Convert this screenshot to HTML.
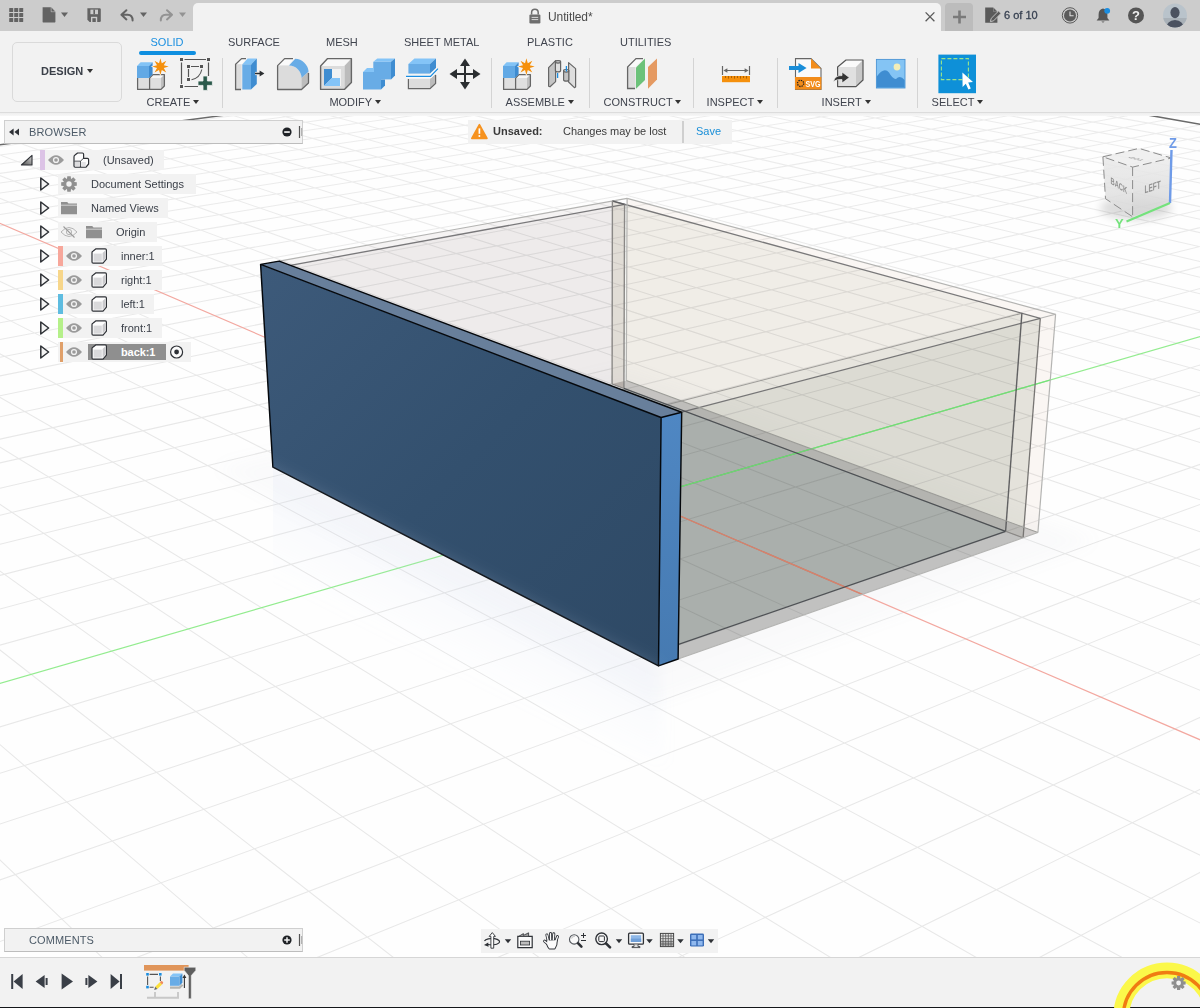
<!DOCTYPE html><html lang="en"><head><meta charset="utf-8"><title>Autodesk Fusion 360</title><style>
*{box-sizing:border-box;margin:0;padding:0}
html,body{width:1200px;height:1008px;overflow:hidden;background:#fefefe}
body{position:relative;font-family:"Liberation Sans",Arial,sans-serif;font-size:11px;color:#3c4350}
#vp{position:absolute;left:0;top:0}
.abs{position:absolute}
#topbar{position:absolute;left:0;top:0;width:1200px;height:31px;background:#cccccc}
#topstrip{display:none}
#tab{position:absolute;left:193px;top:3px;width:748px;height:29px;background:#f2f2f2;border-radius:5px 5px 0 0}
#tabtitle{position:absolute;left:548px;top:10px;font-size:12px;color:#4b4b4b;letter-spacing:-0.1px}
#plusbox{position:absolute;left:945px;top:3px;width:28px;height:28px;background:#bcbcbc;border-radius:4px 4px 0 0}
#jobs{position:absolute;left:1004px;top:9px;font-size:11px;color:#384252;-webkit-text-stroke:0.3px #384252}
#toolbar{position:absolute;left:0;top:31px;width:1200px;height:82px;background:#f2f2f2;border-bottom:1px solid #dcdcdc}
#tbshadow{position:absolute;left:0;top:113px;width:1200px;height:3px;background:linear-gradient(#eeeeee,#f7f7f7)}
#design{position:absolute;left:11.6px;top:41.6px;width:110px;height:60.6px;border:1.4px solid #dadada;border-radius:5px;background:#f2f2f2}
#design span{position:absolute;left:28.5px;top:22px;font-weight:bold;font-size:11px;color:#3a3f48}
.rtab{position:absolute;top:36px;font-size:11px;color:#40444e;white-space:nowrap}
.rtab.on{color:#1a8fe0}
#underline{position:absolute;left:139px;top:51px;width:57px;height:4px;border-radius:2px;background:#0f8fe0}
.glab{position:absolute;top:96px;font-size:11px;color:#40444e;white-space:nowrap}
.glab i{display:inline-block;width:0;height:0;border-left:3px solid transparent;border-right:3px solid transparent;border-top:4px solid #333;margin-left:2.8px;vertical-align:2px}
.sep{position:absolute;top:58px;width:1.5px;height:50px;background:#d4d4d4}
.ico{position:absolute;overflow:visible}
.panel{position:absolute;left:4px;width:299px;height:24px;background:#f2f2f2;border:1px solid #cfcfcf;border-bottom-color:#bdbdbd}
.panel span{position:absolute;left:24px;top:5px;font-size:11px;color:#4d5b68;letter-spacing:0.1px}
.row{position:absolute;height:20px;background:#f2f2f2}
.row .t{position:absolute;top:4px;font-size:11px;color:#3b4049;white-space:nowrap}
.stripe{position:absolute;top:0;height:20px}
#notif{position:absolute;left:468px;top:120px;width:264px;height:24px;background:#f2f2f2}
#notif b{position:absolute;left:25px;top:5px;font-size:11px;color:#3a3a3a}
#notif span{position:absolute;left:95px;top:5px;font-size:11px;color:#3a3a3a}
#notif a{position:absolute;left:228px;top:5px;font-size:11px;color:#1a8fd8}
#notif i{position:absolute;left:214px;top:1px;width:1.5px;height:22px;background:#cfcfcf}
#navbar{position:absolute;left:481px;top:929px;width:237px;height:24px;background:#f2f2f2}
#bottombar{position:absolute;left:0;top:957px;width:1200px;height:50px;background:#f2f2f2;border-top:1px solid #d6d6d6}
#blackstrip{position:absolute;left:0;top:1006.6px;width:1200px;height:2px;background:#14171a}
</style></head><body>
<svg id="vp" width="1200" height="1008" viewBox="0 0 1200 1008">
<defs><filter id="bl" x="-20%" y="-20%" width="140%" height="140%"><feGaussianBlur stdDeviation="9"/></filter><filter id="bl2" x="-50%" y="-50%" width="200%" height="200%"><feGaussianBlur stdDeviation="4"/></filter><linearGradient id="bf" x1="0" y1="0" x2="1" y2="1"><stop offset="0" stop-color="#3d5a7a"/><stop offset="0.5" stop-color="#33506e"/><stop offset="1" stop-color="#2e4965"/></linearGradient><linearGradient id="fade" x1="0" y1="0" x2="0" y2="1"><stop offset="0" stop-color="#fefefe" stop-opacity="0.2"/><stop offset="1" stop-color="#fefefe" stop-opacity="0"/></linearGradient><linearGradient id="cfl" x1="0" y1="0" x2="0" y2="1"><stop offset="0" stop-color="#e9e9e9"/><stop offset="1" stop-color="#dcdcdc"/></linearGradient><linearGradient id="cfr" x1="0" y1="0" x2="0" y2="1"><stop offset="0" stop-color="#ececec"/><stop offset="1" stop-color="#d4d4d4"/></linearGradient><linearGradient id="sf" x1="0" y1="0" x2="0" y2="1"><stop offset="0" stop-color="#4f87c3"/><stop offset="1" stop-color="#467ab1"/></linearGradient><linearGradient id="gsh" gradientUnits="userSpaceOnUse" x1="465" y1="566" x2="420" y2="654"><stop offset="0" stop-color="#cfd9f0" stop-opacity="0.17"/><stop offset="1" stop-color="#cfd9f0" stop-opacity="0"/></linearGradient><filter id="bl3" x="-10%" y="-10%" width="120%" height="120%"><feGaussianBlur stdDeviation="7"/></filter></defs>
<rect x="0" y="0" width="1200" height="1008" fill="#fefefe"/>
<path d="M-779.9 249.5L757.5 46.5M-772.4 259.0L779.0 50.3M-764.6 268.9L801.1 54.2M-756.4 279.1L823.6 58.2M-748.0 289.7L846.6 62.2M-739.3 300.7L870.2 66.3M-730.3 312.1L894.3 70.6M-720.9 324.0L919.0 74.9M-711.1 336.3L944.3 79.3M-700.9 349.1L970.1 83.9M-690.3 362.4L996.6 88.5M-679.3 376.3L1023.8 93.3M-667.8 390.8L1051.6 98.2M-655.8 405.9L1080.1 103.2M-643.3 421.7L1109.3 108.3M-630.2 438.3L1139.3 113.6M-616.4 455.6L1170.1 119.0M-602.1 473.7L1201.7 124.6M-587.0 492.7L1234.1 130.3M-571.1 512.7L1267.5 136.1M-554.4 533.7L1301.7 142.1M-536.9 555.9L1336.9 148.3M-518.4 579.2L1373.1 154.7M-498.8 603.8L1410.4 161.2M-478.1 629.9L1448.7 168.0M-456.2 657.5L1488.2 174.9M-433.0 686.8L1528.8 182.0M-408.2 718.0L1570.7 189.4M-381.9 751.2L1613.9 197.0M-323.7 824.5L1704.4 212.9M-291.5 865.1L1751.9 221.2M-256.8 908.8L1800.9 229.8M-219.5 955.9L1851.6 238.7M-179.1 1006.8L1904.1 248.0M-135.3 1062.0L1958.3 257.5M-87.7 1122.0L2014.5 267.3M-35.6 1187.6L2072.7 277.6M21.5 1259.6L2133.0 288.2M84.4 1338.8L2195.5 299.2M154.0 1426.6L2260.5 310.6M231.5 1524.3L2328.0 322.4M318.3 1633.6L2398.1 334.7M-770.0 246.0L425.2 1709.4M-713.7 238.6L568.1 1613.3M-658.9 231.4L698.1 1526.0M-605.5 224.4L816.7 1446.3M-553.5 217.5L925.4 1373.2M-502.9 210.9L1025.5 1306.0M-453.5 204.4L1117.8 1243.9M-405.3 198.0L1203.3 1186.5M-358.3 191.9L1282.6 1133.2M-312.5 185.8L1356.5 1083.5M-267.8 179.9L1425.5 1037.2M-224.1 174.2L1490.0 993.8M-181.4 168.6L1550.4 953.2M-99.0 157.8L1660.7 879.1M-59.2 152.5L1711.1 845.2M-20.3 147.4L1758.7 813.2M17.8 142.4L1803.7 783.0M55.0 137.5L1846.3 754.3M91.4 132.7L1886.8 727.1M127.1 128.0L1925.2 701.3M161.9 123.4L1961.8 676.7M196.1 119.0L1996.6 653.3M229.5 114.6L2029.8 631.0M262.3 110.2L2061.5 609.7M294.4 106.0L2091.8 589.4M325.8 101.9L2120.7 569.9M356.7 97.8L2148.5 551.3M386.9 93.9L2175.0 533.4M416.5 90.0L2200.5 516.3M445.6 86.1L2225.0 499.8M474.1 82.4L2248.5 484.0M502.0 78.7L2271.1 468.9M529.4 75.1L2292.9 454.2M556.4 71.6L2313.8 440.2M582.8 68.1L2334.0 426.6M608.7 64.7L2353.4 413.5M634.2 61.3L2372.2 400.9M659.2 58.0L2390.3 388.7M683.8 54.8L2407.9 376.9M707.9 51.6L2424.8 365.6M731.7 48.5L2441.2 354.6" stroke="#e8e8e8" stroke-width="1.05" fill="none"/>
<rect x="0" y="112" width="1200" height="260" fill="url(#fade)"/>
<line x1="-781.5" y1="247.5" x2="752.9" y2="45.7" stroke="#6a6a6a" stroke-width="1.6" />
<line x1="752.9" y1="45.7" x2="2455.6" y2="344.8" stroke="#6a6a6a" stroke-width="1.6" />
<polygon points="214.6,467.5 653.1,702.7 1098.4,540.7 624.9,368.6" fill="#8a93a8" opacity="0.035" filter="url(#bl)"/>
<line x1="-40.4" y1="205.9" x2="1355.8" y2="806.8" stroke="#f3a8a0" stroke-width="1.2" />
<line x1="-162.5" y1="730.2" x2="1242.2" y2="324.5" stroke="#93ec8f" stroke-width="1.2" />
<g id="box">
<polygon points="279.2,261.1 612.4,201.0 612.1,384.0 290.7,462.8" fill="#f6f4f4" style="mix-blend-mode:multiply"/>
<polygon points="290.4,265.3 624.6,204.4 623.9,388.4 301.5,468.3" fill="#f8f7f7" style="mix-blend-mode:multiply"/>
<polygon points="612.4,201.0 624.6,204.4 623.9,388.4 612.1,384.0" fill="#f3eeea" style="mix-blend-mode:multiply"/>
<polygon points="627.1,198.4 1055.6,314.3 1037.9,532.6 626.3,380.5" fill="#fbf7f4" style="mix-blend-mode:multiply"/>
<polygon points="612.4,201.0 1040.3,318.3 1023.1,537.8 612.1,384.0" fill="#f5f6f3" style="mix-blend-mode:multiply"/>
<polygon points="626.3,380.5 1037.9,532.6 1023.1,537.8 612.1,384.0" fill="#d2cfce" style="mix-blend-mode:multiply"/>
<polygon points="301.5,468.3 623.9,388.4 1005.6,531.3 661.2,650.4" fill="#bec2c0" style="mix-blend-mode:multiply"/>
<polygon points="681.7,412.2 1040.3,318.3 1023.1,537.8 678.1,659.0" fill="#f3f4f2" style="mix-blend-mode:multiply"/>
<polygon points="664.0,405.5 1021.9,313.3 1005.6,531.3 661.2,650.4" fill="#f6f7f6" style="mix-blend-mode:multiply"/>
<polygon points="661.2,650.4 1005.6,531.3 1023.1,537.8 678.1,659.0" fill="#d0cfcf" style="mix-blend-mode:multiply"/>
<clipPath id="boxclip"><polygon points="260.6,264.4 279.2,261.1 627.1,198.4 1055.6,314.3 1037.9,532.6 1023.1,537.8 678.1,659.0 658.5,665.9 272.9,467.2"/></clipPath>
<g clip-path="url(#boxclip)"><line x1="-40.4" y1="205.9" x2="1355.8" y2="806.8" stroke="#e6856a" stroke-width="1.2" opacity="0.8"/><line x1="-162.5" y1="730.2" x2="1242.2" y2="324.5" stroke="#6fe276" stroke-width="1.2" opacity="0.85"/></g>
<line x1="279.2" y1="261.1" x2="627.1" y2="198.4" stroke="#b4b4b2" stroke-width="1.2" stroke-opacity="1"/>
<line x1="627.1" y1="198.4" x2="1055.6" y2="314.3" stroke="#b4b4b2" stroke-width="1.2" stroke-opacity="1"/>
<line x1="290.4" y1="265.3" x2="624.6" y2="204.4" stroke="#5a5a5c" stroke-width="1.3" stroke-opacity="0.8"/>
<line x1="612.4" y1="201.0" x2="1040.3" y2="318.3" stroke="#5a5a5c" stroke-width="1.3" stroke-opacity="0.8"/>
<line x1="681.7" y1="412.2" x2="1040.3" y2="318.3" stroke="#5a5a5c" stroke-width="1.3" stroke-opacity="0.8"/>
<line x1="664.0" y1="405.5" x2="1021.9" y2="313.3" stroke="#8a8886" stroke-width="1.1" stroke-opacity="0.8"/>
<line x1="1055.6" y1="314.3" x2="1040.3" y2="318.3" stroke="#b4b4b2" stroke-width="1.1" stroke-opacity="1"/>
<line x1="612.4" y1="201.0" x2="624.6" y2="204.4" stroke="#5a5a5c" stroke-width="1.2" stroke-opacity="0.8"/>
<line x1="627.1" y1="198.4" x2="626.3" y2="380.5" stroke="#b4b4b2" stroke-width="1.2" stroke-opacity="1"/>
<line x1="612.4" y1="201.0" x2="612.1" y2="384.0" stroke="#8a8886" stroke-width="1.4" stroke-opacity="1"/>
<line x1="624.6" y1="204.4" x2="623.9" y2="388.4" stroke="#8a8886" stroke-width="1.4" stroke-opacity="1"/>
<line x1="1055.6" y1="314.3" x2="1037.9" y2="532.6" stroke="#b4b4b2" stroke-width="1.2" stroke-opacity="1"/>
<line x1="1040.3" y1="318.3" x2="1023.1" y2="537.8" stroke="#777573" stroke-width="1.3" stroke-opacity="1"/>
<line x1="1021.9" y1="313.3" x2="1005.6" y2="531.3" stroke="#5a5a5c" stroke-width="1.4" stroke-opacity="0.95"/>
<line x1="626.3" y1="380.5" x2="1037.9" y2="532.6" stroke="#9c9c98" stroke-width="1.1" stroke-opacity="1"/>
<line x1="1037.9" y1="532.6" x2="1023.1" y2="537.8" stroke="#b4b4b2" stroke-width="1.1" stroke-opacity="1"/>
<line x1="623.9" y1="388.4" x2="1005.6" y2="531.3" stroke="#45494d" stroke-width="1.25" stroke-opacity="0.92"/>
<line x1="1005.6" y1="531.3" x2="661.2" y2="650.4" stroke="#45494d" stroke-width="1.25" stroke-opacity="0.92"/>
<line x1="1005.6" y1="531.3" x2="1023.1" y2="537.8" stroke="#8a8886" stroke-width="1.2" stroke-opacity="1"/>
<line x1="1023.1" y1="537.8" x2="678.1" y2="659.0" stroke="#b4b4b2" stroke-width="1.2" stroke-opacity="1"/>
<line x1="612.1" y1="384.0" x2="623.9" y2="388.4" stroke="#8a8886" stroke-width="1.1" stroke-opacity="1"/>
<line x1="290.7" y1="462.8" x2="612.1" y2="384.0" stroke="#b4b4b2" stroke-width="1.0" stroke-opacity="1"/>
<polygon points="260.6,264.4 661.1,417.5 658.5,665.9 272.9,467.2" fill="url(#bf)"/>
<polygon points="260.6,264.4 279.2,261.1 681.7,412.2 661.1,417.5" fill="#687f9b"/>
<polygon points="661.1,417.5 681.7,412.2 678.1,659.0 658.5,665.9" fill="url(#sf)"/>
<path d="M260.6 264.4L661.1 417.5L658.5 665.9L272.9 467.2Z M260.6 264.4L279.2 261.1L681.7 412.2L661.1 417.5 M681.7 412.2L678.1 659.0L658.5 665.9" stroke="#05080c" stroke-width="1.45" stroke-linejoin="round" stroke-linecap="round" fill="none"/>
</g>
<g id="viewcube">
<ellipse cx="1136" cy="208" rx="36" ry="12" fill="#000" opacity="0.13" filter="url(#bl2)"/>
<polygon points="1102.9,156.8 1139,148.4 1171.3,158 1132.6,167.1" fill="#ededed" opacity="0.85"/>
<polygon points="1102.9,156.8 1132.6,167.1 1132.6,216.8 1105.5,198.7" fill="url(#cfl)" opacity="0.85"/>
<polygon points="1132.6,167.1 1171.3,158 1170,202.6 1132.6,216.8" fill="url(#cfr)" opacity="0.85"/>
<path d="M1102.9 156.8L1139 148.4L1171.3 158L1132.6 167.1Z M1132.6 167.1L1132.6 216.8 M1102.9 156.8L1105.5 198.7L1132.6 216.8" stroke="#8c8c8c" stroke-width="1" stroke-dasharray="9 4" fill="none"/>
<clipPath id="gclip"><rect x="272.9" y="300" width="1000" height="700"/></clipPath>
<g clip-path="url(#gclip)"><polygon points="242.89999999999998,451.2 658.5,665.9 664.5,765.9 242.89999999999998,617.2" fill="url(#gsh)" filter="url(#bl3)"/></g>
<line x1="1171.5" y1="150" x2="1170" y2="203" stroke="#6f9be8" stroke-width="2.4"/>
<line x1="1170" y1="203" x2="1126.5" y2="221.5" stroke="#74e27c" stroke-width="2.2"/>
<text transform="matrix(0.86,0,0,1,1169,147.8)" font-size="15" fill="#6f9be8" font-family="Liberation Sans, sans-serif" font-weight="bold">Z</text>
<text x="1115" y="228" font-size="13" fill="#74e27c" font-family="Liberation Sans, sans-serif" font-weight="bold">Y</text>
<text transform="matrix(0.72,0.46,0,1.2,1110.5,183.5)" font-size="8" fill="#909090" font-family="Liberation Sans, sans-serif" font-weight="bold">BACK</text>
<text transform="matrix(0.75,-0.25,0,1.3,1144.5,193.5)" font-size="8.6" fill="#909090" font-family="Liberation Sans, sans-serif" font-weight="bold">LEFT</text>
<text transform="matrix(-0.85,-0.22,0.7,-0.2,1145,160)" font-size="8" fill="#a8a8a8" font-family="Liberation Sans, sans-serif" font-weight="bold">TOP</text>
</g>
</svg>
<div id="topbar"></div><div id="topstrip"></div><div id="tab"></div><div id="plusbox"></div>
<div id="tabtitle">Untitled*</div><div id="jobs">6 of 10</div>
<div id="toolbar"></div><div id="tbshadow"></div><div id="design"><span>DESIGN <i style="display:inline-block;border-left:3.2px solid transparent;border-right:3.2px solid transparent;border-top:4px solid #333;vertical-align:2px;margin-left:0.6px"></i></span></div>
<div class="rtab on" style="left:150.5px">SOLID</div>
<div class="rtab" style="left:228px">SURFACE</div>
<div class="rtab" style="left:326px">MESH</div>
<div class="rtab" style="left:404px">SHEET METAL</div>
<div class="rtab" style="left:527px">PLASTIC</div>
<div class="rtab" style="left:620px">UTILITIES</div>
<div id="underline"></div>
<div class="glab" style="left:146.6px">CREATE<i></i></div>
<div class="glab" style="left:329.4px">MODIFY<i></i></div>
<div class="glab" style="left:505.6px">ASSEMBLE<i></i></div>
<div class="glab" style="left:603.6px">CONSTRUCT<i></i></div>
<div class="glab" style="left:706.6px">INSPECT<i></i></div>
<div class="glab" style="left:821.6px">INSERT<i></i></div>
<div class="glab" style="left:931.6px">SELECT<i></i></div>
<div class="sep" style="left:221.5px"></div>
<div class="sep" style="left:490.5px"></div>
<div class="sep" style="left:588.5px"></div>
<div class="sep" style="left:692.5px"></div>
<div class="sep" style="left:776.5px"></div>
<div class="sep" style="left:916.5px"></div>
<div class="panel" style="top:120px"><span>BROWSER</span></div>
<div class="row" style="left:40px;top:150px;width:123.5px"><div class="stripe" style="left:0px;width:4.5px;background:#dcc3e6"></div><div class="t" style="left:63px">(Unsaved)</div></div>
<div class="row" style="left:58px;top:174px;width:137.5px"><div class="t" style="left:33px">Document Settings</div></div>
<div class="row" style="left:58px;top:198px;width:110px"><div class="t" style="left:33px">Named Views</div></div>
<div class="row" style="left:58px;top:222px;width:99px"><div class="t" style="left:58px">Origin</div></div>
<div class="row" style="left:58px;top:246px;width:104px"><div class="stripe" style="left:0px;width:5px;background:#f7a79b"></div><div class="t" style="left:63px">inner:1</div></div>
<div class="row" style="left:58px;top:270px;width:104px"><div class="stripe" style="left:0px;width:5px;background:#f7d68a"></div><div class="t" style="left:63px">right:1</div></div>
<div class="row" style="left:58px;top:294px;width:96px"><div class="stripe" style="left:0px;width:5px;background:#5ebce0"></div><div class="t" style="left:63px">left:1</div></div>
<div class="row" style="left:58px;top:318px;width:104px"><div class="stripe" style="left:0px;width:5px;background:#b5f08a"></div><div class="t" style="left:63px">front:1</div></div>
<div class="row" style="left:58px;top:342px;width:132.5px"><div class="stripe" style="left:2px;width:3.2px;background:#e0a06a"></div><div style="position:absolute;left:30px;top:2px;width:78px;height:16px;background:#8f8f8f"></div><div class="t" style="left:63px;color:#fff;font-weight:bold;letter-spacing:-0.1px">back:1</div></div>
<div id="notif"><b>Unsaved:</b><span>Changes may be lost</span><i></i><a>Save</a></div>
<div class="panel" style="top:928px"><span>COMMENTS</span></div>
<div id="navbar"></div><div id="bottombar"></div><div id="blackstrip"></div>
<svg class="abs" style="left:0;top:0;pointer-events:none" width="1200" height="1008" viewBox="0 0 1200 1008">
<rect x="9.2" y="8" width="4" height="4" rx="0.6" fill="#636363"/><rect x="9.2" y="13" width="4" height="4" rx="0.6" fill="#636363"/><rect x="9.2" y="18" width="4" height="4" rx="0.6" fill="#636363"/><rect x="14.2" y="8" width="4" height="4" rx="0.6" fill="#636363"/><rect x="14.2" y="13" width="4" height="4" rx="0.6" fill="#636363"/><rect x="14.2" y="18" width="4" height="4" rx="0.6" fill="#636363"/><rect x="19.2" y="8" width="4" height="4" rx="0.6" fill="#636363"/><rect x="19.2" y="13" width="4" height="4" rx="0.6" fill="#636363"/><rect x="19.2" y="18" width="4" height="4" rx="0.6" fill="#636363"/><path d="M42.6 7.2H51L55.4 11.8V21.4Q55.4 22.6 54.2 22.6H43.8Q42.6 22.6 42.6 21.4Z" fill="#636363"/><path d="M51 7.2V11.8H55.4" fill="#cccccc" stroke="#cccccc" stroke-width="0.4"/><path d="M51.4 7.6L55 11.4H51.4Z" fill="#636363"/><polygon points="61,12.6 68,12.6 64.5,17" fill="#636363"/><path d="M87.4 8.2H99.6Q100.8 8.2 100.8 9.4V20.8Q100.8 22 99.6 22H89.6L87.4 19.8Z" fill="#636363"/><rect x="90.4" y="9.6" width="7.6" height="4.6" fill="#cccccc"/><rect x="93.4" y="9.6" width="1.6" height="4.6" fill="#636363"/><rect x="91" y="16.8" width="6.2" height="5.2" fill="#cccccc"/><rect x="92.4" y="18.2" width="3.4" height="3.8" fill="#636363"/><path d="M126.4 10.2L121.4 14.8L126.4 19.4M121.8 14.8H127.6Q132.6 14.8 132.6 20.6" fill="none" stroke="#636363" stroke-width="2" stroke-linejoin="round" stroke-linecap="round"/><polygon points="140,12.6 147,12.6 143.5,17" fill="#636363"/><path d="M167 10.2L172 14.8L167 19.4M171.6 14.8H165.8Q160.8 14.8 160.8 20.6" fill="none" stroke="#939393" stroke-width="2" stroke-linejoin="round" stroke-linecap="round"/><polygon points="179,12.6 186,12.6 182.5,17" fill="#939393"/><rect x="529.4" y="14.4" width="11" height="9" rx="1.2" fill="#6e6e6e"/><path d="M531.6 14.4V12.6A3.3 3.3 0 0 1 538.2 12.6V14.4" fill="none" stroke="#6e6e6e" stroke-width="1.5"/><path d="M531.6 17.4h6.6M531.6 19.6h6.6" stroke="#f2f2f2" stroke-width="0.8"/><path d="M925.6 12.4L934.4 21.2M934.4 12.4L925.6 21.2" stroke="#5a5a5a" stroke-width="1.3"/><path d="M953 17H966M959.5 10.5V23.5" stroke="#7a7a7a" stroke-width="2.6"/><path d="M985.2 7.4H993.2L997.4 11.6V22.8H985.2Z" fill="#5a5a5a"/><path d="M993.2 7.4V11.6H997.4Z" fill="#cccccc"/><path d="M993.4 7.8L997 11.4H993.4Z" fill="#5a5a5a"/><path d="M990.4 21.6L991.2 18.4L998.6 11L1001 13.4L993.6 20.8Z" fill="#5a5a5a" stroke="#cccccc" stroke-width="0.9"/><circle cx="1070" cy="15.4" r="7.7" fill="none" stroke="#5a5a5a" stroke-width="1"/><circle cx="1070" cy="15.4" r="6" fill="#5c5c5c"/><path d="M1070 11.4V15.8H1073.6" fill="none" stroke="#dcdcdc" stroke-width="1.1"/><path d="M1103 8.4Q1098.6 9.4 1098.6 14.4V18L1096.6 20.4H1109.4L1107.4 18V14.4Q1107.4 9.4 1103 8.4Z" fill="#555"/><path d="M1101.4 21.6Q1103 23.4 1104.6 21.6Z" fill="#555"/><circle cx="1107.2" cy="10.8" r="2.9" fill="#1a8de0"/><circle cx="1136" cy="15.4" r="8" fill="#555"/><text x="1136" y="20" text-anchor="middle" font-family="Liberation Sans, sans-serif" font-weight="bold" font-size="13" fill="#f0f0f0">?</text><clipPath id="av"><circle cx="1175" cy="15.6" r="12"/></clipPath><g clip-path="url(#av)"><rect x="1163" y="3" width="24" height="26" fill="#b9c3cb"/><rect x="1163" y="18" width="24" height="11" fill="#a9b1b8"/><ellipse cx="1175" cy="12.6" rx="4.6" ry="5.6" fill="#4b5260"/><path d="M1166 29Q1166 21 1175 20Q1184 21 1184 29Z" fill="#4b5260"/></g>
<rect x="137.6" y="78" width="23.4" height="11.4" fill="#dfdfdf"/><polygon points="149.6,78 153,74.6 164.4,74.6 161,78" fill="#f6f6f6"/><polygon points="161,78 164.4,74.6 164.4,86 161,89.4" fill="#c0c0c0"/><path d="M137.6 78V89.4H161L164.4 86V74.6H153L149.6 78M149.6 78V89.4" fill="none" stroke="#666" stroke-width="1.25" stroke-linejoin="round"/><polygon points="137,66 140.6,62.2 152.6,62.2 149,66" fill="#82c3f6"/><polygon points="149,66 152.6,62.2 152.6,74.4 149,78" fill="#3e8bd0"/><rect x="137" y="66" width="12" height="12" fill="#62a9e5"/><polygon points="160.4,57.0 162.3,62.0 167.2,59.8 165.0,64.7 170.0,66.6 165.0,68.5 167.2,73.4 162.3,71.2 160.4,76.2 158.5,71.2 153.6,73.4 155.8,68.5 150.8,66.6 155.8,64.7 153.6,59.8 158.5,62.0" fill="#f4f4f4"/><polygon points="160.4,58.3 161.8,63.2 166.3,60.7 163.8,65.2 168.7,66.6 163.8,68.0 166.3,72.5 161.8,70.0 160.4,74.9 159.0,70.0 154.5,72.5 157.0,68.0 152.1,66.6 157.0,65.2 154.5,60.7 159.0,63.2" fill="#f5900c"/><g stroke="#555" stroke-width="1.2" fill="none"><path d="M184.5 59.5H206M181.5 62.5V84M208.5 62.5V76M184.5 86.5H198"/><path d="M191 66.5H199M188.5 69V77" /><path d="M201.8 69.5Q200 78 191.5 79.8" stroke-width="1.1"/></g><rect x="180.0" y="58.0" width="3" height="3" fill="#555"/><rect x="207.0" y="58.0" width="3" height="3" fill="#555"/><rect x="180.0" y="85.0" width="3" height="3" fill="#555"/><rect x="187.0" y="65.0" width="3" height="3" fill="#555"/><rect x="200.0" y="65.0" width="3" height="3" fill="#555"/><rect x="187.0" y="78.0" width="3" height="3" fill="#555"/><path d="M203 76h4.4v5h5v4.4h-5v5H203v-5h-5V81h5z" fill="#2c5a4c" stroke="#f2f2f2" stroke-width="0.8"/><polygon points="235.6,64.2 241.6,58.6 247,58.6 241.5,64.2" fill="#fafafa"/><rect x="235.6" y="64.2" width="6" height="25.3" fill="#dcdcdc"/><path d="M241 89.5H235.6V64.2L241.6 58.6H246" stroke="#666" stroke-width="1.3" fill="none"/><polygon points="242.3,64.4 247.6,58.5 256.8,58.5 251,64.4" fill="#84c4f7"/><polygon points="251,64.4 256.8,58.5 256.8,84 251,89.5" fill="#3f8dd1"/><rect x="242.3" y="64.4" width="8.7" height="25.1" fill="#68ace6"/><path d="M255 73.5H261" stroke="#f2f2f2" stroke-width="3.2"/><path d="M255 73.5H261" stroke="#2b2e31" stroke-width="1.5"/><polygon points="259.6,70.6 264.4,73.5 259.6,76.4" fill="#2b2e31"/><polygon points="277.6,65.6 284.6,58.6 294,58.6 288,65.6" fill="#fafafa"/><path d="M277.6 89.5V65.6H289A12.5 12.5 0 0 1 301.5 78V89.5Z" fill="#dcdcdc"/><polygon points="301.5,78 308.5,71.6 308.5,83 301.5,89.5" fill="#bdbdbd"/><path d="M289 65.6L295.2 58.8A14 14 0 0 1 308.6 71.6L301.5 78A12.5 12.5 0 0 0 289 65.6Z" fill="#68ace6"/><path d="M293 58.6H284.6L277.6 65.6V89.5H301.5L308.5 83V73" stroke="#666" stroke-width="1.3" fill="none" stroke-linejoin="round"/><polygon points="320.6,66 327.6,58.6 351.4,58.6 344.4,66" fill="#f8f8f8"/><polygon points="344.4,66 351.4,58.6 351.4,82.4 344.4,89.4" fill="#bcbcbc"/><rect x="320.6" y="66" width="23.8" height="23.4" fill="#dcdcdc"/><rect x="324" y="69" width="17" height="17" fill="#f2f2f2"/><polygon points="324,69 332,69 332,78 324,86" fill="#3f8dd1"/><polygon points="324,86 332,78 340,78 340,86" fill="#84c4f7"/><path d="M320.6 66L327.6 58.6H351.4V82.4L344.4 89.4H320.6Z" stroke="#666" stroke-width="1.4" fill="none" stroke-linejoin="round"/><polygon points="373.3,61.8 377.3,58.5 395,58.5 391,61.8" fill="#84c4f7"/><polygon points="391,61.8 395,58.5 395,75.6 391,79.4" fill="#3f8dd1"/><rect x="373.3" y="61.8" width="17.7" height="17.6" fill="#68ace6"/><polygon points="363,72 367,68 374,68 374,72" fill="#84c4f7"/><polygon points="381,79.4 385,79.4 385,85.6 381,89.5" fill="#3f8dd1"/><rect x="363" y="72" width="18" height="17.5" fill="#68ace6"/><polygon points="408.4,64 414.4,58.5 436,58.5 430,64" fill="#84c4f7"/><polygon points="430,64 436,58.5 436,68 430,73.6" fill="#3f8dd1"/><rect x="408.4" y="64" width="21.6" height="9.6" fill="#68ace6"/><polygon points="430,79 435.6,74 435.6,83.5 430,88.6" fill="#bcbcbc"/><rect x="408.4" y="79" width="21.6" height="9.6" fill="#dcdcdc"/><path d="M408.4 79V88.6H430L435.6 83.5V75" stroke="#666" stroke-width="1.2" fill="none"/><path d="M406 76.4H430.5L438 68.6" stroke="#fafafa" stroke-width="3.4" fill="none"/><path d="M406 76.4H430.5L438 68.6" stroke="#1b8de0" stroke-width="1.3" fill="none"/><g fill="#2b2e31" stroke="none"><path d="M464 62h2v24h-2zM453 73h24v2h-24z"/><polygon points="465,58.5 470,66 460,66"/><polygon points="465,89.5 470,82 460,82"/><polygon points="449.5,74 457,69 457,79"/><polygon points="480.5,74 473,69 473,79"/></g><rect x="503.6" y="78" width="23.4" height="11.4" fill="#dfdfdf"/><polygon points="515.6,78 519,74.6 530.4,74.6 527,78" fill="#f6f6f6"/><polygon points="527,78 530.4,74.6 530.4,86 527,89.4" fill="#c0c0c0"/><path d="M503.6 78V89.4H527L530.4 86V74.6H519L515.6 78M515.6 78V89.4" fill="none" stroke="#666" stroke-width="1.25" stroke-linejoin="round"/><polygon points="503,66 506.6,62.2 518.6,62.2 515,66" fill="#82c3f6"/><polygon points="515,66 518.6,62.2 518.6,74.4 515,78" fill="#3e8bd0"/><rect x="503" y="66" width="12" height="12" fill="#62a9e5"/><polygon points="526.4,57.0 528.3,62.0 533.2,59.8 531.0,64.7 536.0,66.6 531.0,68.5 533.2,73.4 528.3,71.2 526.4,76.2 524.5,71.2 519.6,73.4 521.8,68.5 516.8,66.6 521.8,64.7 519.6,59.8 524.5,62.0" fill="#f4f4f4"/><polygon points="526.4,58.3 527.8,63.2 532.3,60.7 529.8,65.2 534.7,66.6 529.8,68.0 532.3,72.5 527.8,70.0 526.4,74.9 525.0,70.0 520.5,72.5 523.0,68.0 518.1,66.6 523.0,65.2 520.5,60.7 525.0,63.2" fill="#f5900c"/><g stroke="#666" stroke-width="1.2" stroke-linejoin="round"><path d="M548.6 67.6L555.6 60.6V81.6L550 86.8L548.6 86.2Z" fill="#c4c4c4"/><path d="M555.4 62a2.6 1.4 0 0 1 5.2 0V70.5a2.6 1.4 0 0 1-5.2 0Z" fill="#e0e0e0"/><ellipse cx="558" cy="61.8" rx="2.6" ry="1.3" fill="#bbb"/><path d="M568.6 62.6L575.6 68.6V87L574.4 87.6L568.6 82Z" fill="#dedede"/><path d="M563.6 71a2.6 1.4 0 0 1 5.2 0V79.8a2.6 1.4 0 0 1-5.2 0Z" fill="#c4c4c4"/><ellipse cx="566.2" cy="70.8" rx="2.6" ry="1.3" fill="#e6e6e6"/></g><path d="M557.6 73V78M566.4 66V71.6" stroke="#1b8de0" stroke-width="1.3"/><polygon points="627.6,67 636,58.6 643.4,58.6 635.4,67" fill="#fafafa"/><rect x="627.6" y="67" width="7.8" height="21.5" fill="#dcdcdc"/><path d="M635 88.5H627.6V67L636 58.6H643" stroke="#666" stroke-width="1.3" fill="none"/><polygon points="636,67.4 645,58.4 645,80 636,88.8" fill="#6cc27a"/><polygon points="648,67 657,58.4 657,79.6 648,88.8" fill="#e59a62"/><rect x="722" y="76" width="28" height="6.2" fill="#f5900c"/><path d="M725.5 76v2M728.5 76v2.6M731.5 76v2M734.5 76v2.6M737.5 76v2M740.5 76v2.6M743.5 76v2M746.5 76v2.6" stroke="#a55a00" stroke-width="0.9"/><path d="M722.5 66v9M749.5 66v9M725 70.5H747" stroke="#666" stroke-width="1.2" fill="none"/><polygon points="723.4,70.5 727.4,68.2 727.4,72.8" fill="#666"/><polygon points="748.6,70.5 744.6,68.2 744.6,72.8" fill="#666"/><path d="M795.5 58.6H811L821 68.6V89.4H795.5Z" fill="#fafafa" stroke="#666" stroke-width="1.1"/><polygon points="811,58.6 821,68.6 811,68.6" fill="#f28c1a"/><rect x="795" y="77" width="26.4" height="12.6" fill="#f28c1a"/><circle cx="800.6" cy="83.4" r="3.1" fill="none" stroke="#222" stroke-width="1.3" stroke-dasharray="1.4 1"/><text x="805.6" y="87" font-family="Liberation Sans, sans-serif" font-weight="bold" font-size="9" fill="#fff" textLength="15" lengthAdjust="spacingAndGlyphs">SVG</text><path d="M789 66H798.5V63L806.6 68L798.5 73V70H789Z" fill="#1a8ed9"/><polygon points="837.6,67 846,60 863,60 856,67" fill="#fafafa"/><polygon points="856,67 863,60 863,80 856,86.6" fill="#c8c8c8"/><rect x="837.6" y="67" width="18.4" height="19.6" fill="#e0e0e0"/><path d="M837.6 67L846 60H863V80L856 86.6H837.6Z" stroke="#555" stroke-width="1.2" fill="none" stroke-linejoin="round"/><path d="M833.4 81.4Q835.5 75 842 75.6V72L849.4 77.6L842 83V79.6Q837 79 833.4 81.4Z" fill="#333" stroke="#f2f2f2" stroke-width="0.7"/><rect x="876.4" y="59.4" width="28.6" height="28.6" fill="#84c4f4" stroke="#4a94d4" stroke-width="0.9"/><path d="M876.8 87.6V76.5Q884 66.5 889 72.5Q893 79.5 896 79Q900 74.5 904.6 80V87.6Z" fill="#3f8dd1"/><circle cx="897" cy="67" r="3.4" fill="#f3eeb8"/><rect x="938.4" y="54.6" width="37.6" height="38.6" fill="#0e90d8"/><rect x="941.4" y="58.6" width="27" height="21" fill="none" stroke="#9be58b" stroke-width="1.1" stroke-dasharray="4 2"/><path d="M962.4 72.4L973 82L968.2 82.6L970.8 88.6L968.4 89.6L965.8 83.8L962.6 87Z" fill="#fff"/>
<polygon points="9,132 13.6,128.6 13.6,135.4" fill="#2e3136"/><polygon points="14.4,132 19,128.6 19,135.4" fill="#2e3136"/><circle cx="287" cy="132" r="4.6" fill="#1f2226"/><rect x="284.2" y="131.2" width="5.6" height="1.7" fill="#f2f2f2"/><path d="M299.5 126v12" stroke="#555" stroke-width="1.2"/><path d="M301.6 128v8" stroke="#999" stroke-width="0.8"/><defs><linearGradient id="tg" x1="1" y1="0" x2="0" y2="1"><stop offset="0" stop-color="#d8d8d8"/><stop offset="1" stop-color="#4a4a4a"/></linearGradient></defs><polygon points="32,155.4 32,165 21.4,165" fill="url(#tg)" stroke="#2e3136" stroke-width="1.1" stroke-linejoin="round"/><path d="M48 160Q56 150.6 64 160Q56 169.4 48 160Z" fill="#9b9b9b"/><circle cx="56" cy="160" r="3.1" fill="#f2f2f2"/><circle cx="56" cy="160" r="1.8" fill="#9b9b9b"/><path d="M74 157Q74 155.6 75 155L77.6 153H82.4Q83.6 153 83.6 154.2V158.4H87.4Q88.6 158.4 88.6 159.6V164L86 167.2H75.2Q74 167.2 74 166Z" fill="#fdfdfd" stroke="#2e3136" stroke-width="1.2" stroke-linejoin="round"/><path d="M74.4 161.2H80.4V167M80.4 161.2L83.4 158.4" stroke="#2e3136" stroke-width="0.9" fill="none"/><rect x="75" y="161.8" width="4.8" height="4.8" fill="#dcdcde"/><rect x="81.2" y="162" width="4.6" height="4.6" fill="#e4e4e6"/><polygon points="40.8,178 48.6,184 40.8,190" fill="#f4f4f4" stroke="#2e3136" stroke-width="1.5" stroke-linejoin="round"/><polygon points="40.8,202 48.6,208 40.8,214" fill="#f4f4f4" stroke="#2e3136" stroke-width="1.5" stroke-linejoin="round"/><polygon points="40.8,226 48.6,232 40.8,238" fill="#f4f4f4" stroke="#2e3136" stroke-width="1.5" stroke-linejoin="round"/><polygon points="40.8,250 48.6,256 40.8,262" fill="#f4f4f4" stroke="#2e3136" stroke-width="1.5" stroke-linejoin="round"/><polygon points="40.8,274 48.6,280 40.8,286" fill="#f4f4f4" stroke="#2e3136" stroke-width="1.5" stroke-linejoin="round"/><polygon points="40.8,298 48.6,304 40.8,310" fill="#f4f4f4" stroke="#2e3136" stroke-width="1.5" stroke-linejoin="round"/><polygon points="40.8,322 48.6,328 40.8,334" fill="#f4f4f4" stroke="#2e3136" stroke-width="1.5" stroke-linejoin="round"/><polygon points="40.8,346 48.6,352 40.8,358" fill="#f4f4f4" stroke="#2e3136" stroke-width="1.5" stroke-linejoin="round"/><polygon points="76.81,182.29 76.81,185.71 74.23,186.01 74.12,186.27 75.74,188.31 73.31,190.74 71.27,189.12 71.01,189.23 70.71,191.81 67.29,191.81 66.99,189.23 66.73,189.12 64.69,190.74 62.26,188.31 63.88,186.27 63.77,186.01 61.19,185.71 61.19,182.29 63.77,181.99 63.88,181.73 62.26,179.69 64.69,177.26 66.73,178.88 66.99,178.77 67.29,176.19 70.71,176.19 71.01,178.77 71.27,178.88 73.31,177.26 75.74,179.69 74.12,181.73 74.23,181.99" fill="#909090"/><circle cx="69" cy="184" r="2.7" fill="#f2f2f2"/><path d="M61 202h6.2l1.3 1.6h8.5v10.6H61Z" fill="#909090"/><path d="M61 205.2h16" stroke="#f2f2f2" stroke-width="0.7"/><path d="M61 232Q69 223 77 232Q69 241 61 232Z" fill="none" stroke="#b4b4b4" stroke-width="1"/><circle cx="69" cy="232" r="2.6" fill="none" stroke="#b4b4b4" stroke-width="1"/><path d="M63.5 226.5L74.5 237.5" stroke="#9a9a9a" stroke-width="1.1"/><path d="M86 226h6.2l1.3 1.6h8.5v10.6H86Z" fill="#909090"/><path d="M86 229.2h16" stroke="#f2f2f2" stroke-width="0.7"/><path d="M66 256Q74 246.6 82 256Q74 265.4 66 256Z" fill="#9b9b9b"/><circle cx="74" cy="256" r="3.1" fill="#f2f2f2"/><circle cx="74" cy="256" r="1.8" fill="#9b9b9b"/><path d="M92 252.6Q92 251.4 93.2 251L96 248.8H105.2Q106.4 248.8 106.4 250V259.2L103 263.2H93.2Q92 263.2 92 262Z" fill="#fdfdfd" stroke="#2e3136" stroke-width="1.2" stroke-linejoin="round"/><rect x="93.6" y="253.6" width="8.2" height="8" fill="#d9d9db"/><polygon points="102.6,253 105.2,250.4 105.2,258.8 102.6,261.8" fill="#c9c9cc"/><path d="M66 280Q74 270.6 82 280Q74 289.4 66 280Z" fill="#9b9b9b"/><circle cx="74" cy="280" r="3.1" fill="#f2f2f2"/><circle cx="74" cy="280" r="1.8" fill="#9b9b9b"/><path d="M92 276.6Q92 275.4 93.2 275L96 272.8H105.2Q106.4 272.8 106.4 274V283.2L103 287.2H93.2Q92 287.2 92 286Z" fill="#fdfdfd" stroke="#2e3136" stroke-width="1.2" stroke-linejoin="round"/><rect x="93.6" y="277.6" width="8.2" height="8" fill="#d9d9db"/><polygon points="102.6,277 105.2,274.4 105.2,282.8 102.6,285.8" fill="#c9c9cc"/><path d="M66 304Q74 294.6 82 304Q74 313.4 66 304Z" fill="#9b9b9b"/><circle cx="74" cy="304" r="3.1" fill="#f2f2f2"/><circle cx="74" cy="304" r="1.8" fill="#9b9b9b"/><path d="M92 300.6Q92 299.4 93.2 299L96 296.8H105.2Q106.4 296.8 106.4 298V307.2L103 311.2H93.2Q92 311.2 92 310Z" fill="#fdfdfd" stroke="#2e3136" stroke-width="1.2" stroke-linejoin="round"/><rect x="93.6" y="301.6" width="8.2" height="8" fill="#d9d9db"/><polygon points="102.6,301 105.2,298.4 105.2,306.8 102.6,309.8" fill="#c9c9cc"/><path d="M66 328Q74 318.6 82 328Q74 337.4 66 328Z" fill="#9b9b9b"/><circle cx="74" cy="328" r="3.1" fill="#f2f2f2"/><circle cx="74" cy="328" r="1.8" fill="#9b9b9b"/><path d="M92 324.6Q92 323.4 93.2 323L96 320.8H105.2Q106.4 320.8 106.4 322V331.2L103 335.2H93.2Q92 335.2 92 334Z" fill="#fdfdfd" stroke="#2e3136" stroke-width="1.2" stroke-linejoin="round"/><rect x="93.6" y="325.6" width="8.2" height="8" fill="#d9d9db"/><polygon points="102.6,325 105.2,322.4 105.2,330.8 102.6,333.8" fill="#c9c9cc"/><path d="M66 352Q74 342.6 82 352Q74 361.4 66 352Z" fill="#9b9b9b"/><circle cx="74" cy="352" r="3.1" fill="#f2f2f2"/><circle cx="74" cy="352" r="1.8" fill="#9b9b9b"/><path d="M92 348.6Q92 347.4 93.2 347L96 344.8H105.2Q106.4 344.8 106.4 346V355.2L103 359.2H93.2Q92 359.2 92 358Z" fill="#fdfdfd" stroke="#2e3136" stroke-width="1.2" stroke-linejoin="round"/><rect x="93.6" y="349.6" width="8.2" height="8" fill="#d9d9db"/><polygon points="102.6,349 105.2,346.4 105.2,354.8 102.6,357.8" fill="#c9c9cc"/><circle cx="176.6" cy="352" r="6" fill="#fafafa" stroke="#2e3136" stroke-width="1.2"/><circle cx="176.6" cy="352" r="2.4" fill="#2e3136"/><circle cx="287" cy="940" r="4.6" fill="#1f2226"/><path d="M284.2 940h5.6M287 937.2v5.6" stroke="#f2f2f2" stroke-width="1.5"/><path d="M299.5 934v12" stroke="#555" stroke-width="1.2"/><path d="M301.6 936v8" stroke="#999" stroke-width="0.8"/><path d="M479.4 124.6L487 138.4H471.8Z" fill="#f6921e" stroke="#f6921e" stroke-width="1.6" stroke-linejoin="round"/><path d="M479.4 128.4v5.4" stroke="#fff" stroke-width="1.7"/><circle cx="479.4" cy="136" r="1" fill="#fff"/>
<path d="M487.6 944.3A7.6 3.2 0 1 0 484.5 941" fill="none" stroke="#2e3136" stroke-width="1.15"/><polygon points="484,945 488.2,942.4 488.6,946.8" fill="#2e3136"/><path d="M492.3 932.6L489.2 936.4H490.9V948.2H493.7V936.4H495.4Z" fill="#fdfdfd" stroke="#2e3136" stroke-width="0.9" stroke-linejoin="round"/><polygon points="504.8,939.2 511.2,939.2 508,943.2" fill="#2e3136"/><path d="M517.8 936.4H532.2V947.6H517.8Z" fill="#fafafa" stroke="#2e3136" stroke-width="1.2"/><rect x="520.4" y="941.2" width="9.2" height="3.8" fill="#bdbdbd" stroke="#2e3136" stroke-width="0.8"/><path d="M519 936.2L523.4 933.6V935.4L528.6 932.8V936.2" fill="#999" stroke="#2e3136" stroke-width="0.8" stroke-linejoin="round"/><line x1="548.2" y1="940.6" x2="546.9" y2="935" stroke="#2e3136" stroke-width="3" stroke-linecap="round"/><line x1="550.6" y1="939.6" x2="550.5" y2="933.6" stroke="#2e3136" stroke-width="3" stroke-linecap="round"/><line x1="553.3" y1="939.6" x2="553.8" y2="933.8" stroke="#2e3136" stroke-width="3" stroke-linecap="round"/><line x1="555.9" y1="941" x2="557.5" y2="936.6" stroke="#2e3136" stroke-width="3" stroke-linecap="round"/><line x1="548.6" y1="944.6" x2="544.6" y2="941.2" stroke="#2e3136" stroke-width="3" stroke-linecap="round"/><path d="M547.2 940.6L556.8 940.2Q557 945 554.6 948.4H549.4Q546.6 945.6 547.2 940.6Z" fill="#2e3136" stroke="#2e3136" stroke-width="2" stroke-linejoin="round"/><line x1="548.2" y1="940.6" x2="546.9" y2="935" stroke="#fbfbfb" stroke-width="1.3" stroke-linecap="round"/><line x1="550.6" y1="939.6" x2="550.5" y2="933.6" stroke="#fbfbfb" stroke-width="1.3" stroke-linecap="round"/><line x1="553.3" y1="939.6" x2="553.8" y2="933.8" stroke="#fbfbfb" stroke-width="1.3" stroke-linecap="round"/><line x1="555.9" y1="941" x2="557.5" y2="936.6" stroke="#fbfbfb" stroke-width="1.3" stroke-linecap="round"/><line x1="548.6" y1="944.6" x2="544.6" y2="941.2" stroke="#fbfbfb" stroke-width="1.3" stroke-linecap="round"/><path d="M547.2 940.6L556.8 940.2Q557 945 554.6 948.4H549.4Q546.6 945.6 547.2 940.6Z" fill="#fbfbfb"/><circle cx="574.2" cy="939.4" r="4.7" fill="#fafafa" stroke="#50545a" stroke-width="1.1"/><path d="M571.4 938.4Q572.4 936.2 575 936.2" fill="none" stroke="#c8c8c8" stroke-width="1.2"/><path d="M578.2 943.4L581.4 946.6" stroke="#2e3136" stroke-width="2.6" stroke-linecap="round"/><path d="M581 935.5H586M583.5 933V938M581 940.5H586" stroke="#2e3136" stroke-width="1"/><circle cx="601.6" cy="938.8" r="5.8" fill="#f6f6f6" stroke="#2e3136" stroke-width="1.4"/><rect x="598.8" y="936" width="5.6" height="5.6" rx="1" fill="none" stroke="#2e3136" stroke-width="1"/><path d="M606 943.4L610 947.4" stroke="#2e3136" stroke-width="2.6" stroke-linecap="round"/><polygon points="615.8,939.2 622.2,939.2 619,943.2" fill="#2e3136"/><rect x="628.6" y="933.2" width="14.8" height="11" rx="1" fill="#fafafa" stroke="#2e3136" stroke-width="1.3"/><rect x="630.8" y="935.2" width="10.4" height="6.8" fill="#8fb8e8"/><rect x="630.8" y="938.6" width="10.4" height="3.4" fill="#6f9fd8"/><path d="M634 944.4V946.6H632V947.6H640V946.6H638V944.4" fill="#ddd" stroke="#2e3136" stroke-width="0.8"/><polygon points="646.3,939.2 652.7,939.2 649.5,943.2" fill="#2e3136"/><rect x="660.4" y="933.4" width="13.2" height="13.2" fill="#e8e8e8" stroke="#444" stroke-width="1"/><path d="M663.0 933.4V946.6M660.4 936.0H673.6M665.7 933.4V946.6M660.4 938.7H673.6M668.3 933.4V946.6M660.4 941.3H673.6M671.0 933.4V946.6M660.4 944.0H673.6" stroke="#555" stroke-width="0.8"/><rect x="660.4" y="941.3" width="13.2" height="5.3" fill="#555" opacity="0.35"/><polygon points="677.3,939.2 683.7,939.2 680.5,943.2" fill="#2e3136"/><rect x="690" y="933.6" width="14" height="13" rx="1.4" fill="#3d6fb8"/><rect x="691.4" y="935" width="4.8" height="4.4" fill="#8fb8ee"/><rect x="697.8" y="935" width="4.8" height="4.4" fill="#8fb8ee"/><rect x="691.4" y="941" width="4.8" height="4.4" fill="#8fb8ee"/><rect x="697.8" y="941" width="4.8" height="4.4" fill="#8fb8ee"/><polygon points="707.8,939.2 714.2,939.2 711,943.2" fill="#2e3136"/>
<rect x="11.2" y="974" width="2" height="15" fill="#3a3f47"/><polygon points="22.6,974 22.6,989 13.6,981.5" fill="#3a3f47"/><polygon points="44.6,975 44.6,988 35.6,981.5" fill="#3a3f47"/><rect x="45.6" y="978" width="2" height="7" fill="#3a3f47"/><polygon points="61.6,973.6 61.6,989.4 73,981.5" fill="#3a3f47"/><rect x="85.4" y="978" width="2" height="7" fill="#3a3f47"/><polygon points="88.4,975 88.4,988 97.4,981.5" fill="#3a3f47"/><polygon points="110.6,974 110.6,989 119.6,981.5" fill="#3a3f47"/><rect x="120" y="974" width="2" height="15" fill="#3a3f47"/><rect x="144" y="965" width="44.6" height="5.6" fill="#e0955a"/><path d="M149.6 974.4H158M147.6 976.6V985M160.4 976.6V981M149.6 987.2H153.6" fill="none" stroke="#555" stroke-width="1.1"/><rect x="146.2" y="973" width="2.6" height="2.6" fill="#1a8de0"/><rect x="159" y="973" width="2.6" height="2.6" fill="#1a8de0"/><rect x="146.2" y="985.8" width="2.6" height="2.6" fill="#1a8de0"/><path d="M155.2 986.8L159.8 982.2L162 984.4L157.4 989Z" fill="#fce03a"/><path d="M159.8 982.2L160.8 981.2Q161.6 980.6 162.4 981.4L162.8 981.8Q163.6 982.6 162.9 983.4L162 984.4Z" fill="#f08a5a"/><path d="M155.2 986.8L157.4 989L154.2 990Z" fill="#666"/><polygon points="170,976.6 173,973.6 182.4,973.6 179.4,976.6" fill="#84c4f7"/><polygon points="179.4,976.6 182.4,973.6 182.4,982.8 179.4,985.8" fill="#3f8dd1"/><rect x="170" y="976.6" width="9.4" height="9.2" fill="#68ace6"/><path d="M170 987.6H179.6L182.6 984.8" stroke="#b4b4b0" stroke-width="2.2" fill="none"/><path d="M184.4 988V977.4" stroke="#333" stroke-width="1.1"/><polygon points="184.4,974.6 186.4,978 182.4,978" fill="#333"/><path d="M147 997.8H179M155 992V997.8M178 992V997.8" fill="none" stroke="#c8c8c8" stroke-width="1.9"/><path d="M184.2 967.2H195.8V970.4L191.3 975.6V998.8H188.4V975.6L184.2 970.4Z" fill="#5e5e5e" stroke="#f4f4f4" stroke-width="0.6"/><circle cx="1167" cy="1016.1" r="45.7" fill="none" stroke="#fbf84a" stroke-width="15.8"/><circle cx="1167" cy="1016.1" r="43.6" fill="none" stroke="#f07c12" stroke-width="3.3"/>
<polygon points="1185.63,981.46 1185.63,984.54 1183.27,984.79 1183.17,985.03 1184.66,986.88 1182.48,989.06 1180.63,987.57 1180.39,987.67 1180.14,990.03 1177.06,990.03 1176.81,987.67 1176.57,987.57 1174.72,989.06 1172.54,986.88 1174.03,985.03 1173.93,984.79 1171.57,984.54 1171.57,981.46 1173.93,981.21 1174.03,980.97 1172.54,979.12 1174.72,976.94 1176.57,978.43 1176.81,978.33 1177.06,975.97 1180.14,975.97 1180.39,978.33 1180.63,978.43 1182.48,976.94 1184.66,979.12 1183.17,980.97 1183.27,981.21" fill="#8e8e8e"/><circle cx="1178.6" cy="983" r="2.4" fill="#f2f2f2"/>
</svg>
</body></html>
